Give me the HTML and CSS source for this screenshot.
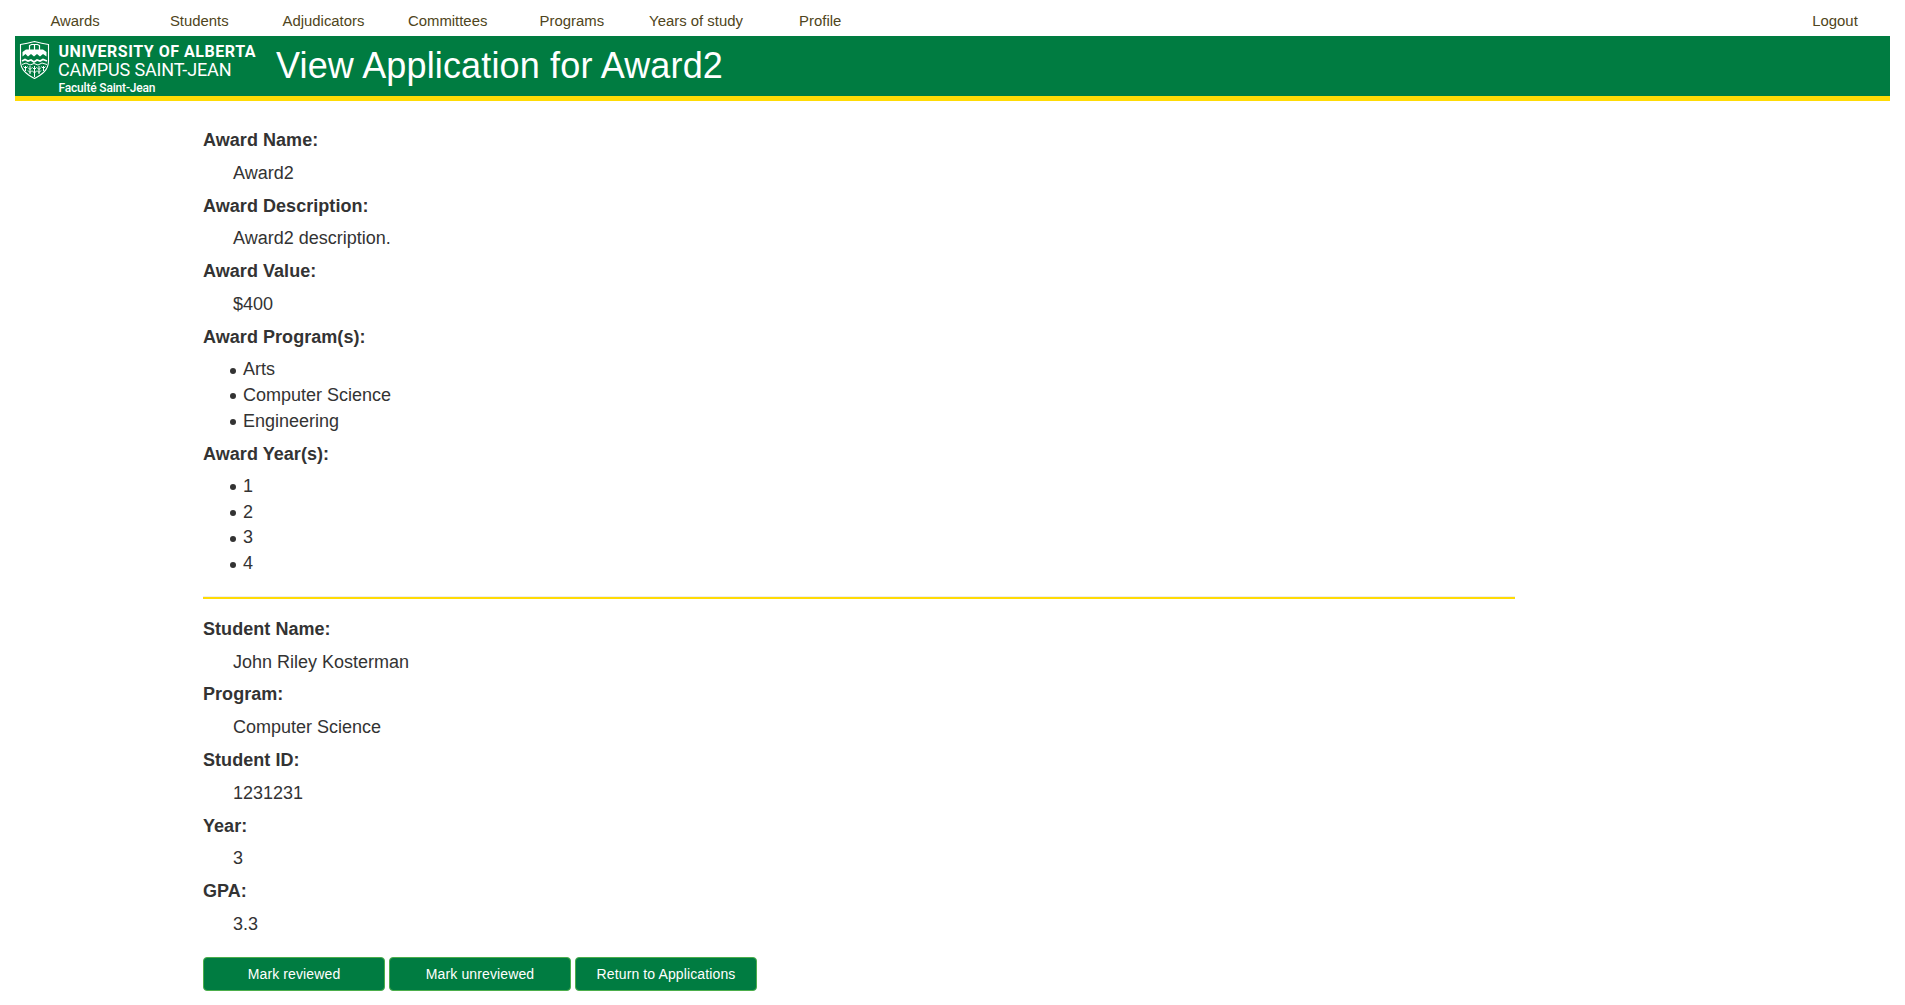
FILE: index.html
```html
<!DOCTYPE html>
<html lang="en">
<head>
<meta charset="utf-8">
<title>View Application for Award2</title>
<link rel="stylesheet" href="styles.css">
</head>
<body>
<nav class="nav">
  <a class="nav-item">Awards</a>
  <a class="nav-item">Students</a>
  <a class="nav-item">Adjudicators</a>
  <a class="nav-item">Committees</a>
  <a class="nav-item">Programs</a>
  <a class="nav-item">Years of study</a>
  <a class="nav-item">Profile</a>
  <a class="nav-item logout">Logout</a>
</nav>
<header class="banner">
  <svg class="logo" width="245" height="60" viewBox="15 36 245 60" fill="#fff">
    <path d="M20.500 44.500Q27 43.500 34.500 41.500Q42 43.500 48.500 44.500V61C48.500 70 42 74.500 34.500 78.500C27 74.500 20.500 70 20.500 61Z" fill="none" stroke="#fff" stroke-width="1.100"/>
    <path d="M22.500 56.500V52L26 49.500H43L46.500 52V56.500L43 54L40 56.500L37 54L34 56.500L31 54L28 56.500L25.500 54Z"/>
    <path d="M29.500 50V45.500L31.500 44.500H37.500L39.500 45.500V50M34.500 44.500V50" fill="none" stroke="#fff" stroke-width="1.200"/>
    <path d="M22 61L25 59.500L28 61L31 60L34 62L37 60L40 61L43 59.500L47 61" fill="none" stroke="#fff" stroke-width="1.700"/>
    <path d="M22 64.500L26 63L30 65L34 63.500L38 65L42 63L47 64.500" fill="none" stroke="#fff"/>
    <path d="M25.500 66V71M30 66V74M34.500 66V77M39 66V74M43.500 66V71M23.500 66.500L25.500 68.500L27.500 66.500M28 67.500L30 69.500L32 67.500M28 70.500L30 72.500L32 70.500M32.500 67.500L34.500 69.500L36.500 67.500M37 67.500L39 69.500L41 67.500M37 70.500L39 72.500L41 70.500M41.500 66.500L43.500 68.500L45.500 66.500M32.500 71L34.500 73L36.500 71" fill="none" stroke="#fff"/>
    <text class="logo-bold" x="58.500" y="57" textLength="197">UNIVERSITY OF ALBERTA</text>
    <text class="logo-light" x="58" y="75.500" textLength="173.500">CAMPUS SAINT-JEAN</text>
    <text class="logo-small" x="58.500" y="92" textLength="97">Faculté Saint-Jean</text>
  </svg>
  <h1 class="title">View Application for Award2</h1>
</header>
<main class="content">
  <section class="details">
    <p class="label">Award Name:</p>
    <p class="value">Award2</p>
    <p class="label">Award Description:</p>
    <p class="value">Award2 description.</p>
    <p class="label">Award Value:</p>
    <p class="value">$400</p>
    <p class="label">Award Program(s):</p>
    <ul class="list"><li>Arts</li><li>Computer Science</li><li>Engineering</li></ul>
    <p class="label">Award Year(s):</p>
    <ul class="list"><li>1</li><li>2</li><li>3</li><li>4</li></ul>
  </section>
  <hr class="rule">
  <section class="details">
    <p class="label">Student Name:</p>
    <p class="value">John Riley Kosterman</p>
    <p class="label">Program:</p>
    <p class="value">Computer Science</p>
    <p class="label">Student ID:</p>
    <p class="value">1231231</p>
    <p class="label">Year:</p>
    <p class="value">3</p>
    <p class="label">GPA:</p>
    <p class="value">3.3</p>
  </section>
  <div class="actions">
    <button class="btn">Mark reviewed</button>
    <button class="btn">Mark unreviewed</button>
    <button class="btn">Return to Applications</button>
  </div>
</main>
</body>
</html>
```

FILE: styles.css
```css
* { box-sizing: border-box; }
body {
  margin: 0;
  padding: 0 15px;
  background: #fff;
  color: #333;
  font-family: "Liberation Sans", Arial, sans-serif;
  font-size: 18px;
  line-height: 25.7px;
}
.nav {
  display: flex;
  height: 36px;
  padding-top: 9px;
}
.nav-item {
  width: 124.2px;
  color: #4f4520;
  font-size: 14.9px;
  text-align: center;
}
.nav-item:first-child { margin-left: -2px; }
.logout { width: 110px; margin-left: auto; }
.banner {
  display: flex;
  height: 65px;
  background: #007c41;
  border-bottom: 5px solid #ffdb05;
}
.logo { display: block; flex: none; }
.logo-bold, .logo-light, .logo-small { font-family: Roboto, sans-serif; }
.logo-bold { font-size: 16px; font-weight: 700; }
.logo-light { font-size: 18px; font-weight: 400; }
.logo-small { font-size: 12px; font-weight: 500; }
.title {
  margin: 10px 0 0 16px;
  color: #fff;
  font-size: 36px;
  font-weight: 400;
  line-height: 40px;
  letter-spacing: 0.15px;
  white-space: nowrap;
}
.content { width: 1312px; margin-left: 188px; padding-top: 27px; }
.label, .value { margin: 0 0 7.1px; }
.label { font-weight: 700; letter-spacing: 0.05px; }
.value { padding-left: 30px; }
.list {
  margin: -0.5px 0 7.1px;
  padding-left: 40px;
  line-height: 25.8px;
  list-style: none;
}
.list li { position: relative; }
.list li::before {
  content: "";
  position: absolute;
  left: -13px;
  top: 10.5px;
  width: 6px;
  height: 6px;
  border-radius: 50%;
  background: #333;
}
.rule {
  height: 3px;
  margin: 19.3px 0 17.5px;
  border: 0;
  border-top: 1px solid #eee;
  background: #ffdb05;
}
.actions { display: flex; gap: 4px; padding-top: 12.5px; }
.btn {
  width: 182px;
  height: 34px;
  padding: 0;
  border: 1px solid #4cae4c;
  border-radius: 4px;
  background: #007c41;
  color: #fff;
  font: 14px/20px "Liberation Sans", Arial, sans-serif;
  letter-spacing: 0.12px;
}
```
